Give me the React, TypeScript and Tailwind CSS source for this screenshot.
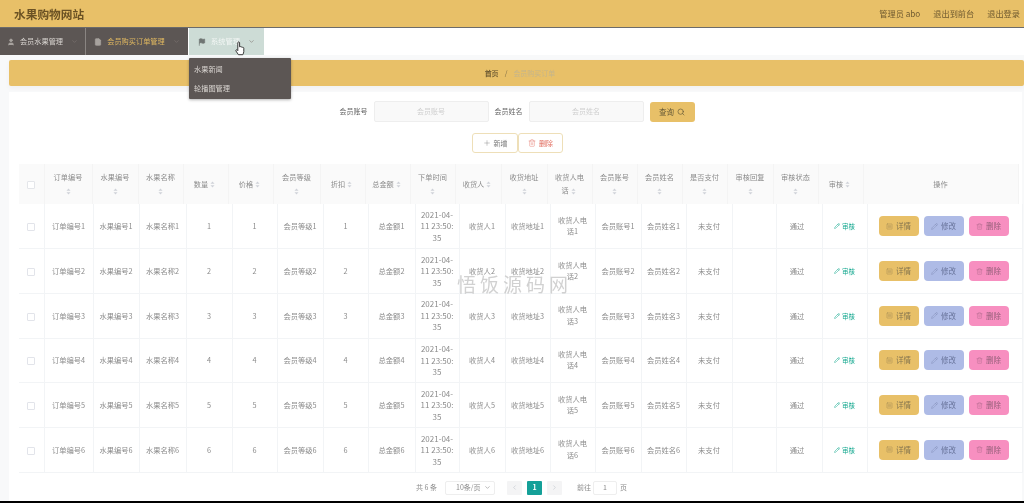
import { ChevronDown, ChevronLeft, ChevronRight, FileText, Flag, Pencil, Plus, Search, Trash2, User, SquareMenu } from "lucide-react";

const font = "font-['Noto_Sans_CJK_SC','Noto_Sans',sans-serif]";

const headWidths = ["w-[25px]", "w-[48px]", "w-[46px]", "w-[45px]", "w-[45px]", "w-[45px]", "w-[47px]", "w-[45px]", "w-[45px]", "w-[45px]", "w-[46px]", "w-[46px]", "w-[45px]", "w-[45px]", "w-[45px]", "w-[45px]", "w-[46px]", "w-[45px]", "w-[45px]", "w-[155px]"];
const bodyWidths = ["w-[25px]", "w-[49px]", "w-[46px]", "w-[47px]", "w-[46px]", "w-[45px]", "w-[46px]", "w-[45px]", "w-[47px]", "w-[44px]", "w-[46px]", "w-[45px]", "w-[45px]", "w-[46px]", "w-[45px]", "w-[46px]", "w-[44px]", "w-[46px]", "w-[45px]", "w-[155px]"];

const heads: [string, boolean][] = [
  ["订单编号", true], ["水果编号", true], ["水果名称", true], ["数量", false], ["价格", false], ["会员等级", true], ["折扣", false], ["总金额", false], ["下单时间", true], ["收货人", false], ["收货地址", true], ["收货人电话", false], ["会员账号", true], ["会员姓名", true], ["是否支付", true], ["审核回复", true], ["审核状态", true], ["审核", false],
];

function Sort() {
  return (
    <svg width="5" height="7" viewBox="0 0 6 8" className="mx-[2px] inline-block align-middle">
      <path d="M3 0.5 5.4 3.2H0.6Z" fill="#cfd2d8" />
      <path d="M3 7.5 5.4 4.8H0.6Z" fill="#cfd2d8" />
    </svg>
  );
}

function Nav({ icon, label, cls, textCls }: { icon: React.ReactNode; label: string; cls: string; textCls: string }) {
  return (
    <div className={`flex h-full items-center justify-center gap-[5px] ${cls}`}>
      {icon}
      <span className={`whitespace-nowrap text-[7.2px] ${textCls}`}>{label}</span>
      <ChevronDown size={7} className="ml-[3px] text-[#7f7773]" />
    </div>
  );
}

function ActionBtn({ icon, label, cls }: { icon: React.ReactNode; label: string; cls: string }) {
  return (
    <button className={`flex h-[20px] w-[40px] items-center justify-center gap-[3px] rounded-[4px] text-[7.5px] ${cls}`}>
      {icon}
      {label}
    </button>
  );
}

function Row({ n }: { n: number }) {
  const cells = [`订单编号${n}`, `水果编号${n}`, `水果名称${n}`, `${n}`, `${n}`, `会员等级${n}`, `${n}`, `总金额${n}`];
  const td = "border-r border-b border-[#f2f4f6] p-0 text-center align-middle";
  return (
    <tr className="h-[44.7px]">
      <td className={td}>
        <span className="inline-block h-[8px] w-[8px] rounded-[1px] border border-[#e2e4ea] bg-white align-middle" />
      </td>
      {cells.map((c, i) => (
        <td key={i} className={td}>{c}</td>
      ))}
      <td className={td}><span className="block text-[8px] leading-[11.5px]">2021-04-<br />11 23:50:<br />35</span></td>
      <td className={td}>{`收货人${n}`}</td>
      <td className={td}>{`收货地址${n}`}</td>
      <td className={td}><span className="block leading-[11.5px]">收货人电<br />话{n}</span></td>
      <td className={td}>{`会员账号${n}`}</td>
      <td className={td}>{`会员姓名${n}`}</td>
      <td className={td}>未支付</td>
      <td className={td} />
      <td className={`${td} pr-[4px]`}>通过</td>
      <td className={td}>
        <span className="inline-flex items-center gap-[2px] text-[6.5px] text-[#14a88f]"><Pencil size={6} />审核</span>
      </td>
      <td className={td}>
        <div className="flex items-center justify-center gap-[5px] pr-[2px]">
          <ActionBtn cls="bg-[#e8c068] text-[#85754f]" icon={<SquareMenu size={7} strokeWidth={1} />} label="详情" />
          <ActionBtn cls="bg-[#aebbe6] text-[#68739a]" icon={<Pencil size={7} strokeWidth={1} />} label="修改" />
          <ActionBtn cls="bg-[#f78fc0] text-[#96607a]" icon={<Trash2 size={7} strokeWidth={1} />} label="删除" />
        </div>
      </td>
    </tr>
  );
}

export default function App() {
  return (
    <div className={`relative flex h-[503px] w-[1024px] flex-col overflow-hidden bg-[#f8f9fa] blur-[0.35px] ${font}`}>
      <header className="flex h-[27px] shrink-0 items-center justify-between bg-[#e8c068] pl-[14px] pr-[4px] shadow-[0_1px_1px_#6b6b6b]">
        <h1 className="text-[11.7px] font-bold text-[#6b5224]">水果购物网站</h1>
        <div className="flex items-center gap-[13px] text-[8.2px] text-[#6f5a30]">
          <span>管理员 abo</span>
          <span>退出到前台</span>
          <span>退出登录</span>
        </div>
      </header>

      <nav className="mt-[1px] flex h-[27px] shrink-0 bg-white">
        <Nav cls="w-[86px] border-r border-[#8a8582] bg-[#5c5654]" textCls="text-[#d8d4d0]" label="会员水果管理" icon={<User size={8} className="text-[#a8a39f]" fill="#a8a39f" />} />
        <Nav cls="w-[102px] bg-[#5c5654]" textCls="text-[#e0b860]" label="会员购买订单管理" icon={<FileText size={8} className="text-[#a8a39f]" fill="#a8a39f" />} />
        <Nav cls="ml-[1px] w-[75px] bg-[#cddcd6]" textCls="text-[#f2f6f4]" label="系统管理" icon={<Flag size={8} className="text-[#6f7573]" fill="#6f7573" />} />
      </nav>

      <main className="flex min-h-0 flex-1 flex-col pl-[9px] pr-[2px] pt-[5px]">
        <div className="-mr-[2px] flex h-[26px] shrink-0 items-center justify-center gap-[6px] rounded-[2px] bg-[#e8c068] pl-[7px] text-[7px] shadow-[0_2px_4px_#f0f0f0]">
          <span className="font-medium text-[#5a4a2a]">首页</span>
          <span className="text-[#7a6a45]">/</span>
          <span className="text-[#c4b48c]">会员购买订单</span>
        </div>

        <section className="mt-[6px] flex min-h-0 flex-1 flex-col bg-white pl-[10px]">
          <form className="mt-[9px] flex h-[21px] shrink-0 items-center justify-center pr-[7px] text-[7px] text-[#666]">
            <label>会员账号</label>
            <div className="ml-[6px] flex h-[21px] w-[115px] items-center justify-center rounded-[2px] border border-[#eeeeee] bg-[#f9f9f9] text-[#cfcfcf]">会员账号</div>
            <label className="ml-[6px]">会员姓名</label>
            <div className="ml-[6px] flex h-[21px] w-[115px] items-center justify-center rounded-[2px] border border-[#eeeeee] bg-[#f9f9f9] text-[#cfcfcf]">会员姓名</div>
            <button type="button" className="ml-[6px] flex h-[20px] w-[45px] items-center justify-center gap-[3px] rounded-[3px] bg-[#e8c068] text-[7.5px] text-[#665a38]">
              查询<Search size={8} />
            </button>
          </form>

          <div className="mt-[11px] flex h-[20px] shrink-0 justify-center pr-[6px] text-[7px]">
            <button className="flex w-[46px] items-center justify-center gap-[3px] rounded-[3px] border border-[#eedfb8] text-[#777]"><Plus size={8} strokeWidth={1.2} />新增</button>
            <button className="flex w-[45px] items-center justify-center gap-[3px] rounded-[3px] border border-[#eedfb8] text-[#e0685a]"><Trash2 size={8} strokeWidth={1.2} />删除</button>
          </div>

          <table className="mt-[11px] w-[999px] shrink-0 table-fixed border-collapse bg-[#fafafa] text-[7.2px] text-[#8c8c8c]">
            <colgroup>
              {headWidths.map((w, i) => <col key={i} className={w} />)}
            </colgroup>
            <thead>
              <tr className="h-[40px]">
                <th className="border-r border-[#f4f4f4] p-0 text-center font-normal">
                  <span className="inline-block h-[8px] w-[8px] rounded-[1px] border border-[#e4e6ea] bg-white align-middle" />
                </th>
                {heads.map(([h, stack]) => (
                  <th key={h} className="border-r border-[#f4f4f4] p-0 text-center font-normal leading-[13px]">
                    {stack ? (<>{h}<br /><Sort /></>) : h === "收货人电话" ? (<>收货人电<br />话<Sort /></>) : (<>{h}<Sort /></>)}
                  </th>
                ))}
                <th className="border-r border-[#f4f4f4] p-0 text-center font-normal">操作</th>
              </tr>
            </thead>
          </table>

          <table className="w-[1003px] shrink-0 table-fixed border-collapse text-[7.3px] leading-[12px] text-[#8c8c8c]">
            <colgroup>
              {bodyWidths.map((w, i) => <col key={i} className={w} />)}
            </colgroup>
            <tbody>
              {[1, 2, 3, 4, 5, 6].map((n) => <Row key={n} n={n} />)}
            </tbody>
          </table>

          <div className="mt-[8px] flex h-[14px] shrink-0 items-center pl-[397px] text-[7px] text-[#8c8c8c]">
            <span className="w-[29px]">共 6 条</span>
            <div className="flex h-[14px] w-[50px] items-center justify-between rounded-[2px] border border-[#eeeeee] pl-[10px] pr-[3px]">
              10条/页<ChevronDown size={7} />
            </div>
            <span className="ml-[12px] flex h-[14px] w-[15px] items-center justify-center rounded-[1px] bg-[#f4f4f5] text-[#c0c4cc]"><ChevronLeft size={7} /></span>
            <span className="ml-[5px] flex h-[14px] w-[15px] items-center justify-center rounded-[1px] bg-[#14a098] font-bold text-white">1</span>
            <span className="ml-[5px] flex h-[14px] w-[15px] items-center justify-center rounded-[1px] bg-[#f4f4f5] text-[#c0c4cc]"><ChevronRight size={7} /></span>
            <span className="ml-[15px]">前往</span>
            <span className="ml-[2px] flex h-[14px] w-[24px] items-center justify-center rounded-[2px] border border-[#eeeeee]">1</span>
            <span className="ml-[3px]">页</span>
          </div>
        </section>
      </main>
      <div className="h-[2px] shrink-0 bg-black" />

      <div className="absolute left-[189px] top-[58px] w-[102px] rounded-[1px] bg-[#5c5654] py-[2px] pl-[5px] text-[7.2px] leading-[18.5px] text-[#d8d4d0] shadow-[0_1px_3px_rgba(0,0,0,0.3)]">
        <div>水果新闻</div>
        <div>轮播图管理</div>
      </div>

      <svg className="absolute left-[235px] top-[41px]" width="10" height="15" viewBox="0 0 10 15">
        <path d="M3 1.2c.6-.6 1.5-.3 1.6.6v4l.4-.1c.5-.2 1-.1 1.2.3.5-.2 1-.1 1.2.3.6-.2 1.4.1 1.4.9v3.3c0 1.2-.5 2-1 3.2H3.4c-.5-1-1.5-2.2-2.4-3.6-.4-.7 0-1.4.7-1.3.4 0 .8.4 1.1.8V1.9c0-.3.1-.5.2-.7Z" fill="#fff" stroke="#222" strokeWidth="0.9" />
      </svg>

      <div className="pointer-events-none absolute left-[457px] top-[272px] whitespace-nowrap font-['Liberation_Serif','Noto_Sans_CJK_SC',serif] text-[19px] tracking-[4px] text-[#bdbdbd]/70">悟饭源码网</div>
    </div>
  );
}
